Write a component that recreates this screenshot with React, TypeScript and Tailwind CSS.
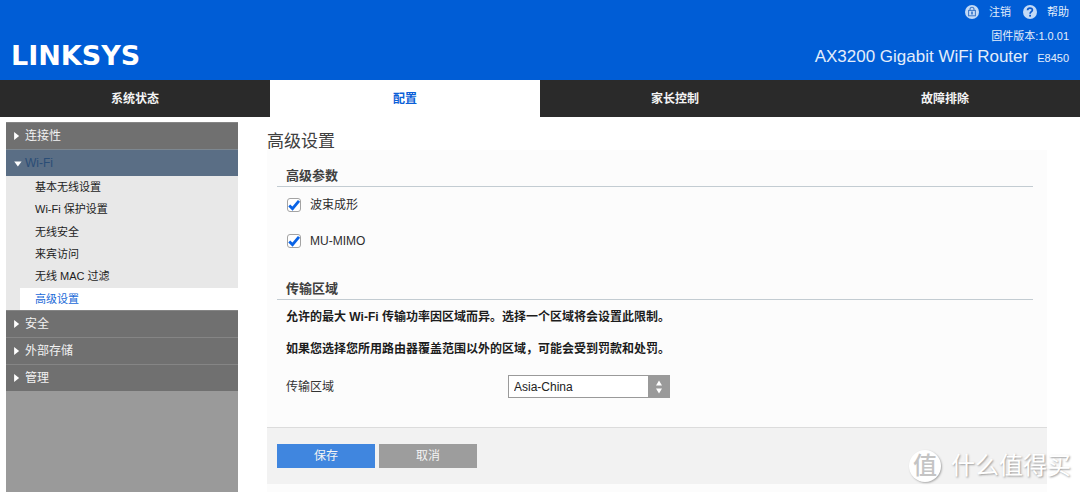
import { useState } from "react";

const tabs = ["系统状态", "配置", "家长控制", "故障排除"];
const wifiPages = ["基本无线设置", "Wi-Fi 保护设置", "无线安全", "来宾访问", "无线 MAC 过滤", "高级设置"];

function LockIcon() {
  return (
    <svg viewBox="0 0 14 14" className="size-[14px]" aria-hidden="true">
      <circle cx="7" cy="7" r="7" fill="#c3daf6" />
      <path d="M5 5.6V4.2a2 2 0 0 1 4 0V5.6" fill="none" stroke="#3a76c8" strokeWidth="1.1" />
      <rect x="3.6" y="5.4" width="6.8" height="5.4" fill="none" stroke="#3a76c8" strokeWidth="1" />
      <path d="M7 6.4v3.2" stroke="#1a62c4" strokeWidth="1.4" />
    </svg>
  );
}

function HelpIcon() {
  return (
    <svg viewBox="0 0 14 14" className="size-[14px]" aria-hidden="true">
      <circle cx="7" cy="7" r="7" fill="#c3daf6" />
      <path
        d="M4.6 5.2C4.6 2.3 9.4 2.4 9.4 5C9.4 6.7 7.1 6.6 7.1 8.8"
        fill="none"
        stroke="#0a58cc"
        strokeWidth="1.7"
      />
      <rect x="6.2" y="9.8" width="1.8" height="1.8" fill="#0a58cc" />
    </svg>
  );
}

function MenuItem({ label, open = false }: { label: string; open?: boolean }) {
  return (
    <button
      type="button"
      aria-expanded={open}
      className={
        open
          ? "flex h-[27px] w-full items-center border-t border-[#7d8790] bg-[#5a6e85] pl-2 text-left text-xs text-[#2a4d76]"
          : "flex h-[27px] w-full items-center border-t border-[#858585] bg-[#707070] pl-2 text-left text-xs text-[#f2f2f2]"
      }
    >
      <svg viewBox="0 0 8 8" className="mr-[3px] size-2" aria-hidden="true">
        <path d={open ? "M0.2 2.6h7.4l-3.7 4.8z" : "M0.1 0l5 4l-5 4z"} fill="#fff" />
      </svg>
      {label}
    </button>
  );
}

function Check({ id, label }: { id: string; label: string }) {
  const [on, setOn] = useState(true);
  return (
    <div className="flex h-9 items-center gap-[9px] pl-[10px]">
      <span className="grid size-[14px]">
        <input
          id={id}
          type="checkbox"
          checked={on}
          onChange={() => setOn(!on)}
          className="col-start-1 row-start-1 size-[14px] appearance-none rounded-[3px] border border-[#a3a3a3] bg-white"
        />
        {on && (
          <svg viewBox="0 0 14 14" className="pointer-events-none col-start-1 row-start-1 size-[14px]" aria-hidden="true">
            <path d="M2.2 7.4L5.5 10.6L12 2.8" fill="none" stroke="#0a63e6" strokeWidth="2.8" />
          </svg>
        )}
      </span>
      <label htmlFor={id} className="text-xs text-[#2d2d2d]">
        {label}
      </label>
    </div>
  );
}

function SectionTitle({ children }: { children: string }) {
  return (
    <h2 className="border-b border-[#c3ccd2] pl-[9px] text-[13px] leading-[21px] font-bold text-[#404040]">
      {children}
    </h2>
  );
}

export default function App() {
  const [region, setRegion] = useState("Asia-China");
  return (
    <div className="relative flex min-h-screen flex-col bg-white font-['Liberation_Sans','Noto_Sans_CJK_SC',sans-serif]">
      <header className="flex h-20 justify-between bg-[#005dd6] pr-[11px] pl-[11px] text-white">
        <div className="self-end pb-2 font-['DejaVu_Sans',sans-serif] text-[27px] leading-8 font-bold">LINKSYS</div>
        <div className="flex flex-col items-end pt-[2px] text-[11px] text-[#e3edfb]">
          <div className="flex h-5 items-center">
            <a href="#logout" className="flex items-center gap-[10px]">
              <LockIcon />
              注销
            </a>
            <a href="#help" className="ml-3 flex items-center gap-[10px]">
              <HelpIcon />
              帮助
            </a>
          </div>
          <div className="mt-1 leading-5">固件版本:1.0.01</div>
          <div className="flex items-baseline gap-[9px] leading-[22px]">
            <span className="text-[17px]">AX3200 Gigabit WiFi Router</span>
            <span>E8450</span>
          </div>
        </div>
      </header>

      <nav className="grid h-[37px] grid-cols-4 bg-[#2a2a2a] text-xs font-bold">
        {tabs.map((t) => (
          <a
            key={t}
            href="#tab"
            className={
              t === "配置"
                ? "flex items-center justify-center bg-white text-[#0b5fd8]"
                : "flex items-center justify-center text-[#f4f4f4]"
            }
          >
            {t}
          </a>
        ))}
      </nav>

      <div className="flex flex-1 pt-[5px] pr-[33px] pl-[6px]">
        <aside className="w-[232px] shrink-0 bg-[#9a9a9a]">
          <MenuItem label="连接性" />
          <MenuItem label="Wi-Fi" open />
          <ul className="grid h-[134px] grid-rows-6 bg-[#e8e8e8] text-[11px] text-[#1c1c1c]">
            {wifiPages.map((p) => (
              <li key={p} className="pl-[14px]">
                <a
                  href="#page"
                  className={
                    p === "高级设置"
                      ? "flex h-full items-center bg-white pl-[15px] text-[#1a6ad8]"
                      : "flex h-full items-center pl-[15px]"
                  }
                >
                  {p}
                </a>
              </li>
            ))}
          </ul>
          <MenuItem label="安全" />
          <MenuItem label="外部存储" />
          <MenuItem label="管理" />
        </aside>

        <main className="ml-[29px] flex min-w-0 flex-1 flex-col">
          <h1 className="pt-3 text-[17px] leading-4 text-[#404040]">高级设置</h1>
          <div className="flex-1 bg-[#fcfcfc]">
            <form onSubmit={(e) => e.preventDefault()}>
              <div className="pt-[15px] pr-[14px] pb-[29px] pl-[10px]">
                <SectionTitle>高级参数</SectionTitle>
                <Check id="beam" label="波束成形" />
                <Check id="mimo" label="MU-MIMO" />
                <div className="pt-[19px]">
                  <SectionTitle>传输区域</SectionTitle>
                </div>
                <div className="flex flex-col gap-3 pt-[7px] pl-[9px] text-xs leading-5 font-bold text-[#1c1c1c]">
                  <p>允许的最大 Wi-Fi 传输功率因区域而异。选择一个区域将会设置此限制。</p>
                  <p>如果您选择您所用路由器覆盖范围以外的区域，可能会受到罚款和处罚。</p>
                </div>
                <div className="flex items-center pt-4 pl-[9px] text-xs text-[#333]">
                  <label htmlFor="region" className="w-[222px]">
                    传输区域
                  </label>
                  <div className="grid h-[23px] w-[162px] grid-cols-[1fr_22px]">
                    <select
                      id="region"
                      value={region}
                      onChange={(e) => setRegion(e.target.value)}
                      className="col-span-2 col-start-1 row-start-1 h-[23px] appearance-none border border-[#9a9a9a] bg-white pl-[5px] text-xs text-[#222]"
                    >
                      <option>Asia-China</option>
                    </select>
                    <span className="pointer-events-none col-start-2 row-start-1 grid place-items-center bg-[#9a9a9a]">
                      <svg viewBox="0 0 8 14" className="h-[14px] w-2" aria-hidden="true">
                        <path d="M1 5.5h6l-3-5zM1 8.5h6l-3 5z" fill="#fff" />
                      </svg>
                    </span>
                  </div>
                </div>
              </div>
              <div className="flex gap-1 border-t border-[#dcdcdc] bg-[#f2f2f2] py-4 pl-[10px] text-xs text-[#f4f4f4]">
                <button type="submit" className="h-6 w-[98px] bg-[#4086df]">
                  保存
                </button>
                <button type="reset" className="h-6 w-[98px] bg-[#9d9d9d]">
                  取消
                </button>
              </div>
            </form>
          </div>
        </main>
      </div>

      <div className="pointer-events-none absolute right-[9px] bottom-2 flex items-center gap-[10px] text-white">
        <span className="flex size-8 items-center justify-center rounded-full bg-white text-2xl leading-8 font-medium text-[#c4c4c4] shadow-[1px_1px_2px_#aaa]">
          值
        </span>
        <span className="text-2xl leading-9 [text-shadow:1px_1px_2px_#999]">什么值得买</span>
      </div>
    </div>
  );
}
